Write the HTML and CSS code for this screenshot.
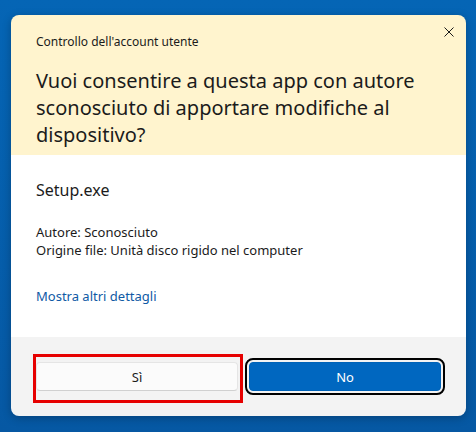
FILE: index.html
```html
<!DOCTYPE html>
<html lang="it">
<head>
    <meta charset="UTF-8">
    <title>Controllo dell'account utente</title>
    <link rel="stylesheet" href="styles.css">
</head>
<body>
    <div class="dialog">
        <div class="header">
            <div class="header-top">
                <div class="caption">Controllo dell'account utente</div>
                <button class="close" aria-label="Chiudi">
                    <svg width="10" height="10" viewBox="0 0 10 10">
                        <path d="M0.5 0.5 L9.5 9.5 M9.5 0.5 L0.5 9.5" stroke="#1b1b1b" stroke-width="1" fill="none"/>
                    </svg>
                </button>
            </div>
            <h1 class="question">Vuoi consentire a questa app con autore sconosciuto di apportare modifiche al dispositivo?</h1>
        </div>
        <div class="content">
            <div class="app-name">Setup.exe</div>
            <div class="info">
                <div>Autore: Sconosciuto</div>
                <div>Origine file: Unità disco rigido nel computer</div>
            </div>
            <a class="details" href="#">Mostra altri dettagli</a>
        </div>
        <div class="footer">
            <div class="highlight">
                <button class="btn btn-yes">Sì</button>
            </div>
            <button class="btn btn-no">No</button>
        </div>
    </div>
</body>
</html>
```

FILE: styles.css
```css
body {
    margin: 0;
    height: 432px;
    overflow: hidden;
    background: linear-gradient(#0565b5, #0658a3);
    font-family: "Noto Sans", "Open Sans", sans-serif;
    color: #1b1b1b;
}
.dialog {
    margin: 15px 0 0 11px;
    width: 455px;
    height: 401px;
    border-radius: 8px;
    overflow: hidden;
    display: flex;
    flex-direction: column;
    box-shadow: 0 2px 8px rgba(0, 0, 0, 0.25);
}
.header {
    background-color: #fff4ce;
    height: 140px;
    padding-left: 25px;
    box-sizing: border-box;
}
.header-top {
    display: flex;
    justify-content: space-between;
    align-items: flex-start;
}
.caption {
    padding-top: 19px;
    font-size: 12px;
    line-height: 16px;
}
.close {
    width: 34px;
    height: 34px;
    border: none;
    background: transparent;
    padding: 0;
    display: flex;
    align-items: center;
    justify-content: center;
}
.question {
    margin: 17px 25px 0 0;
    font-size: 20px;
    font-weight: normal;
    line-height: 27px;
}
.content {
    background-color: #fff;
    height: 182px;
    padding: 24px 25px 0;
    box-sizing: border-box;
}
.app-name {
    font-size: 16px;
    line-height: 22px;
}
.info {
    margin-top: 22px;
    font-size: 13px;
    line-height: 18px;
}
.details {
    display: inline-block;
    margin-top: 29px;
    font-size: 13px;
    line-height: 17px;
    color: #0f5aa5;
    text-decoration: none;
}
.footer {
    flex: 1;
    background-color: #f3f3f3;
    padding: 25px 25px 0;
    display: flex;
    align-items: flex-start;
    gap: 11px;
}
.highlight {
    position: relative;
    display: flex;
}
.highlight::after {
    content: "";
    position: absolute;
    left: -3px;
    top: -8px;
    right: -5px;
    bottom: -12px;
    border: 3px solid #e60000;
}
.btn {
    height: 29px;
    border-radius: 4px;
    font-family: inherit;
    font-size: 13px;
    padding: 0;
}
.btn-yes {
    width: 202px;
    background-color: #fbfbfb;
    border: 1px solid #e5e5e5;
    border-bottom-color: #d0d0d0;
    color: #1b1b1b;
}
.btn-no {
    width: 192px;
    background-color: #0067c0;
    border: 1px solid #0063b9;
    color: #fff;
    outline: 2px solid #000;
    outline-offset: 2px;
}
```
